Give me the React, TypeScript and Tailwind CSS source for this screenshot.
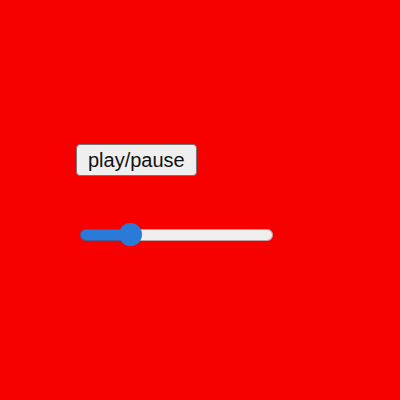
import React, { useState } from "react";

const MIN = 0;
const MAX = 100;

export default function App() {
  const [playing, setPlaying] = useState(false);
  const [position, setPosition] = useState(23);

  const ratio = (position - MIN) / (MAX - MIN);

  // the fill ends under the middle of the 23px thumb
  const fill = `calc(12px + (100% - 23px) * ${ratio})`;

  return (
    <main className="flex min-h-screen flex-col items-start bg-[#f60000] pl-[76px] pr-8 pt-36 font-['Liberation_Sans',Arial,sans-serif]">
      <button
        type="button"
        aria-pressed={playing}
        onClick={() => setPlaying(!playing)}
        className="h-8 rounded border border-[#767676] bg-[#efefef] px-[11px] text-xl leading-none text-[#111111] hover:bg-[#e5e5e5]"
      >
        play/pause
      </button>

      <input
        type="range"
        aria-label="Position"
        min={MIN}
        max={MAX}
        value={position}
        onChange={(e) => setPosition(Number(e.target.value))}
        style={{ "--fill": fill } as React.CSSProperties}
        className="ml-1 mt-[47px] h-6 w-full max-w-[193px] cursor-pointer appearance-none bg-transparent
          [&::-webkit-slider-runnable-track]:h-3 [&::-webkit-slider-runnable-track]:rounded-full
          [&::-webkit-slider-runnable-track]:bg-[linear-gradient(to_right,#2a7ad8_var(--fill),#efefef_var(--fill))]
          [&::-webkit-slider-runnable-track]:shadow-[inset_0_0_0_1px_rgba(120,40,40,0.4)]
          [&::-webkit-slider-thumb]:-mt-1.5 [&::-webkit-slider-thumb]:size-[23px] [&::-webkit-slider-thumb]:appearance-none
          [&::-webkit-slider-thumb]:rounded-full [&::-webkit-slider-thumb]:bg-[#2a7ad8]"
      />
    </main>
  );
}
